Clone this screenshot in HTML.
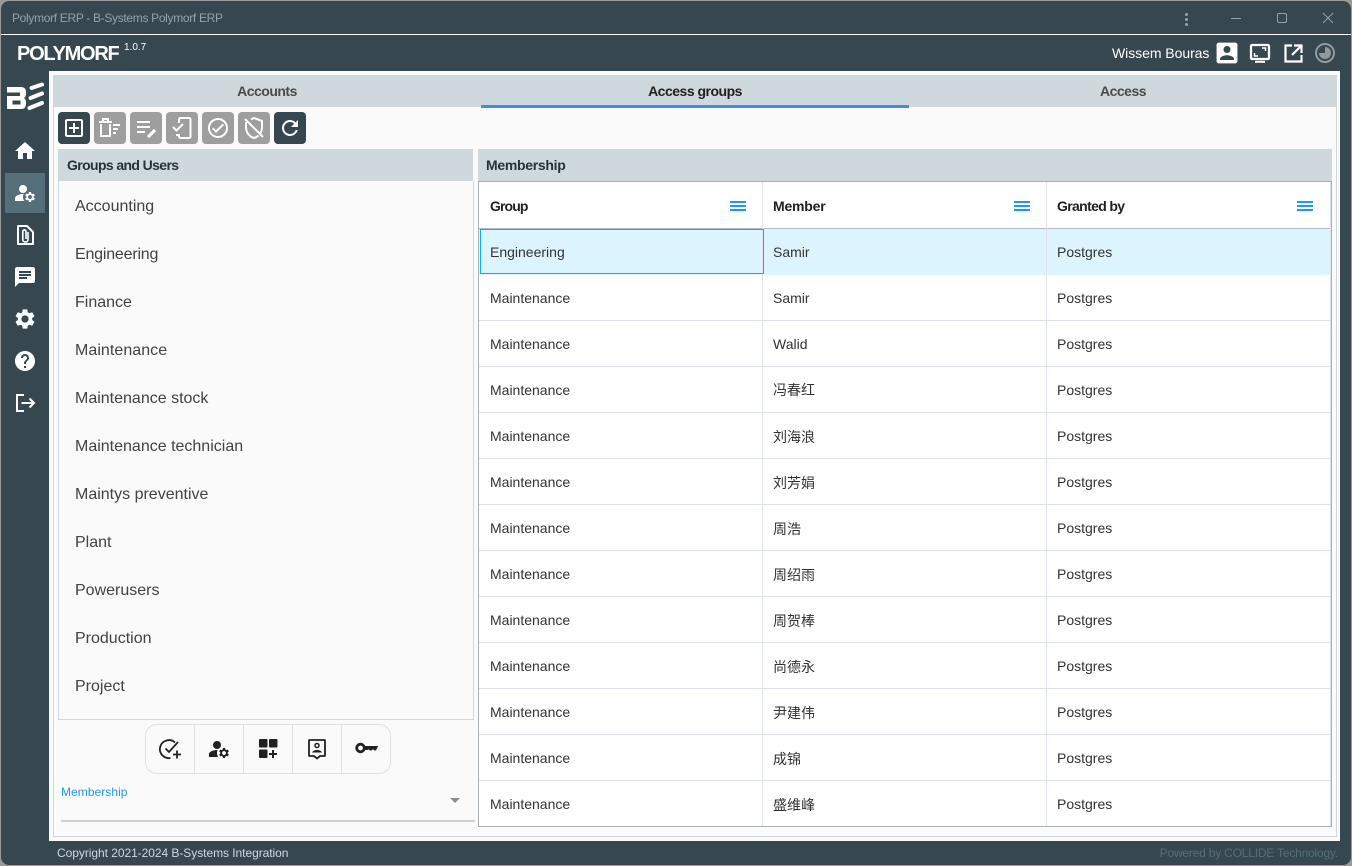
<!DOCTYPE html>
<html><head><meta charset="utf-8">
<style>
*{box-sizing:border-box}
html,body{margin:0;padding:0;width:1352px;height:866px;overflow:hidden;background:#9a9a9a;font-family:"Liberation Sans","Noto Sans CJK SC",sans-serif}
.a{position:absolute}
svg{display:block}
#win{position:absolute;left:1px;top:1px;width:1350px;height:864px;background:#37474f;border-radius:8px;overflow:hidden}
.page{position:absolute;left:0;top:0;width:1352px;height:866px}
.tab{position:absolute;top:75px;height:32px;width:428px;background:#cfd8dc;text-align:center;font-size:14px;line-height:32px;font-weight:bold;color:#4a4a4a;letter-spacing:-.5px}
.tb{position:absolute;top:112px;width:32px;height:32px;border-radius:4px;background:#9e9e9e}
.tb.d{background:#37474f}
.tb svg{position:absolute;left:4px;top:4px}
.h{position:absolute;background:#cfd8dc;font-size:14px;font-weight:bold;color:#263238;line-height:32px;height:32px;padding-left:9px;letter-spacing:-.55px}
.li{position:absolute;left:75px;font-size:16px;line-height:20px;color:#424242}
.nav{position:absolute;left:13px}
.grid{position:absolute;left:478px;top:181px;width:854px;height:646px;background:#fff;border:1px solid #a8b0b6;overflow:hidden}
.col{position:absolute;top:0;width:1px;height:644px;background:#dfe3ee}
.r{position:absolute;left:0;width:852px;height:46px;border-bottom:1px solid #dfe1ee;font-size:14px;color:#333}
.r span{position:absolute;top:14px;line-height:18px}
.r.c span:nth-child(2){top:15px}
.r span:nth-child(1){left:11px}
.r span:nth-child(2){left:294px}
.r span:nth-child(3){left:578px}
.th{position:absolute;top:15px;font-size:14px;font-weight:bold;color:#212121;line-height:18px}
.mn{position:absolute;top:19px;width:16px;height:10px;border-top:2px solid #2196f3;border-bottom:2px solid #2196f3}
.mn:after{content:"";position:absolute;left:0;right:0;top:2px;height:2px;background:#2196f3}
.bg{position:absolute;top:724px;width:50px;height:50px;border-top:1px solid #e0e0e0;border-bottom:1px solid #e0e0e0;border-left:1px solid #e0e0e0;background:#fafafa}
.bg svg{position:absolute;left:12px;top:12px}
</style></head><body>
<div id="win"></div>
<div class="page">
<div class="a" style="left:12px;top:10px;font-size:12px;line-height:16px;color:#90a4ae;letter-spacing:-.32px">Polymorf ERP - B-Systems Polymorf ERP</div>
<div class="a" style="left:1185px;top:13px;width:3px;height:3px;background:#90a4ae;border-radius:50%;box-shadow:0 5px 0 #90a4ae,0 10px 0 #90a4ae"></div>
<div class="a" style="left:1231px;top:18px;width:10px;height:1px;background:#90a4ae"></div>
<div class="a" style="left:1277px;top:13px;width:10px;height:10px;border:1px solid #90a4ae;border-radius:2px"></div>
<svg class="a" style="left:1322px;top:12px" width="12" height="12" viewBox="0 0 12 12"><path d="M1 1l10 10M11 1L1 11" stroke="#90a4ae" stroke-width="1"/></svg>
<div class="a" style="left:1px;top:34px;width:1350px;height:1px;background:#fff"></div>
<div class="a" style="left:17px;top:41px;font-size:20px;line-height:26px;font-weight:bold;color:#fff;letter-spacing:-1.25px">POLYMORF</div>
<div class="a" style="left:124px;top:41px;font-size:10px;line-height:14px;color:#fff">1.0.7</div>
<div class="a" style="left:1112px;top:44px;font-size:14px;line-height:18px;color:#fff;letter-spacing:-.05px">Wissem Bouras</div>
<svg class="a" style="left:1216px;top:42px" width="22" height="22" viewBox="2.500 2.500 19 19" fill="#fff"><path d="M3 5v14c0 1.100.89 2 2 2h14c1.100 0 2-.9 2-2V5c0-1.100-.9-2-2-2H5c-1.110 0-2 .9-2 2zm12 4c0 1.660-1.340 3-3 3s-3-1.340-3-3 1.340-3 3-3 3 1.340 3 3zm-9 8c0-2 4-3.100 6-3.100s6 1.100 6 3.100v1H6v-1z"/></svg>
<svg class="a" style="left:1249px;top:43px" width="22" height="20" viewBox="0 0 22 20" fill="none" stroke="#fff" stroke-width="2.300"><rect x="2" y="2" width="18" height="14" rx="1"/><path d="M5.500 10v3h3.500M16.500 8V5H13" stroke-width="1.500"/><path d="M6 18.800h10" stroke-width="2"/></svg>
<svg class="a" style="left:1284px;top:44px" width="19" height="19" viewBox="0 0 19 19" fill="none" stroke="#fff" stroke-width="2.200"><path d="M8 1.500H1.500v16h16V11M10 1.500h7.500V9M17 2L8 11"/></svg>
<svg class="a" style="left:1315px;top:43px" width="20" height="20" viewBox="0 0 20 20"><circle cx="10" cy="10" r="9" fill="none" stroke="#8f9a9f" stroke-width="2"/><path d="M10 4a6 6 0 1 1-6 6h6z" fill="#8f9a9f"/></svg>

<div class="a" style="left:49px;top:71px;width:1291px;height:770px;background:#fafafa"></div>
<div class="a" style="left:53px;top:75px;width:1284px;height:762px;border:1px solid #cfd8dc;border-top:0"></div>
<div class="tab" style="left:53px">Accounts</div>
<div class="tab" style="left:481px;color:#212121">Access groups</div>
<div class="tab" style="left:909px">Access</div>
<div class="a" style="left:481px;top:105px;width:428px;height:3px;background:#448aee"></div>

<svg class="a" style="left:7px;top:83px;overflow:visible" width="37" height="28" viewBox="0 0 37 28" fill="#fff"><path fill-rule="evenodd" d="M0 4H14Q19 4 19 9V11Q19 13.500 17 15Q19 16.500 19 19V21Q19 26 14 26H0V13H13V9.500H0ZM5.500 17.500V21.500H13.500V17.500Z"/><path d="M24.600 5L35 1.500M23.600 15L35 10.500M22.500 25L35 20" stroke="#fff" stroke-width="4" stroke-linecap="round" fill="none"/></svg>

<svg class="nav" style="top:139px" width="24" height="24" viewBox="0 0 24 24" fill="#fff"><path d="M10 20v-6h4v6h5v-8h3L12 3 2 12h3v8z"/></svg>
<div class="a" style="left:5px;top:173px;width:40px;height:40px;background:#546e7a"></div>
<svg class="nav" style="top:181px" width="24" height="24" viewBox="0 0 24 24" fill="#fff"><path d="M10.670 13.020C10.450 13.010 10.230 13 10 13c-2.420 0-4.680.67-6.610 1.820C2.510 15.340 2 16.320 2 17.350V20h9.260c-.79-1.130-1.260-2.510-1.260-4 0-1.070.25-2.070.67-2.980z"/><circle cx="10" cy="8" r="4"/><path d="M20.750 16c0-.22-.03-.42-.06-.63l1.140-1.010-1-1.730-1.450.49c-.32-.27-.68-.48-1.080-.63L18 11h-2l-.3 1.490c-.4.15-.76.36-1.080.63l-1.450-.49-1 1.730 1.140 1.010c-.03.21-.06.41-.06.63s.03.42.06.63l-1.140 1.010 1 1.730 1.450-.49c.32.27.68.48 1.080.63L16 21h2l.3-1.490c.4-.15.76-.36 1.080-.63l1.450.49 1-1.730-1.140-1.010c.03-.21.06-.41.06-.63zM17 18c-1.100 0-2-.9-2-2s.9-2 2-2 2 .9 2 2-.9 2-2 2z"/></svg>
<svg class="nav" style="top:223px" width="24" height="24" viewBox="0 0 24 24" fill="none" stroke="#fff" stroke-width="2"><path d="M5 3h9l6 6v12H5z" stroke-linejoin="round"/><path d="M15 9v7.500a2.600 2.600 0 0 1-5.200 0V8.500a1.600 1.600 0 0 1 3.200 0V16" stroke-width="1.600"/></svg>
<svg class="nav" style="top:265px" width="24" height="24" viewBox="0 0 24 24" fill="#fff"><path d="M20 2H4c-1.100 0-1.990.9-1.990 2L2 22l4-4h14c1.100 0 2-.9 2-2V4c0-1.100-.9-2-2-2zM6 9h12v2H6V9zm8 5H6v-2h8v2zm4-6H6V6h12v2z"/></svg>
<svg class="nav" style="top:307px" width="24" height="24" viewBox="0 0 24 24" fill="#fff"><path d="M19.140 12.940c.04-.3.06-.61.06-.94 0-.32-.02-.64-.07-.94l2.030-1.580c.18-.14.23-.41.12-.61l-1.920-3.320c-.12-.22-.37-.29-.59-.22l-2.390.96c-.5-.38-1.030-.7-1.620-.94l-.36-2.540c-.04-.24-.24-.41-.48-.41h-3.840c-.24 0-.43.17-.47.41l-.36 2.540c-.59.24-1.130.57-1.620.94l-2.390-.96c-.22-.08-.47 0-.59.22L2.740 8.870c-.12.21-.08.47.12.61l2.030 1.580c-.05.3-.09.63-.09.94s.02.64.07.94l-2.030 1.580c-.18.14-.23.41-.12.61l1.920 3.320c.12.22.37.29.59.22l2.390-.96c.5.38 1.030.7 1.620.94l.36 2.540c.05.24.24.41.48.41h3.840c.24 0 .44-.17.47-.41l.36-2.540c.59-.24 1.130-.56 1.620-.94l2.390.96c.22.08.47 0 .59-.22l1.920-3.320c.12-.22.07-.47-.12-.61l-2.010-1.580zM12 15.600c-1.980 0-3.600-1.620-3.600-3.600s1.620-3.600 3.600-3.600 3.600 1.620 3.600 3.600-1.620 3.600-3.600 3.600z"/></svg>
<svg class="nav" style="top:349px" width="24" height="24" viewBox="0 0 24 24" fill="#fff"><path d="M12 2C6.480 2 2 6.480 2 12s4.480 10 10 10 10-4.480 10-10S17.520 2 12 2zm1 17h-2v-2h2v2zm2.070-7.750l-.9.92C13.450 12.900 13 13.500 13 15h-2v-.5c0-1.100.45-2.100 1.170-2.830l1.240-1.260c.37-.36.59-.86.59-1.410 0-1.100-.9-2-2-2s-2 .9-2 2H8c0-2.210 1.790-4 4-4s4 1.790 4 4c0 .88-.36 1.680-.93 2.250z"/></svg>
<svg class="nav" style="top:391px" width="24" height="24" viewBox="0 0 24 24" fill="none" stroke="#fff" stroke-width="2"><path d="M11 4H4v16h7"/><path d="M8.500 12H21M16.500 7.500L21 12l-4.500 4.500"/></svg>

<div class="tb d" style="left:58px"><svg width="24" height="24" viewBox="0 0 24 24" fill="#fff"><path d="M19 3H5c-1.110 0-2 .9-2 2v14c0 1.100.89 2 2 2h14c1.100 0 2-.9 2-2V5c0-1.100-.9-2-2-2zm0 16H5V5h14v14zm-8-2h2v-4h4v-2h-4V7h-2v4H7v2h4z"/></svg></div>
<div class="tb" style="left:94px"><svg width="24" height="24" viewBox="0 0 24 24" fill="none" stroke="#fff" stroke-width="2"><path d="M1 6h13M5 5V3h5v2M3 8v12h9V8M15 9h7M15 13h5M15 17h3"/></svg></div>
<div class="tb" style="left:130px"><svg width="24" height="24" viewBox="0 0 24 24" fill="none" stroke="#fff" stroke-width="2"><path d="M3 6h13M3 11h13M3 16h8"/><path d="M14 21l7-7" stroke-width="3.200"/></svg></div>
<div class="tb" style="left:166px"><svg width="24" height="24" viewBox="0 0 24 24" fill="none" stroke="#fff" stroke-width="2"><path d="M9 7V3.500a1.500 1.500 0 0 1 1.500-1.500H19a1.500 1.500 0 0 1 1.500 1.500v17A1.500 1.500 0 0 1 19 22h-8.500A1.500 1.500 0 0 1 9 20.500V19H6"/><path d="M3 11l3.500 3.500L13 8"/></svg></div>
<div class="tb" style="left:202px"><svg width="24" height="24" viewBox="0 0 24 24" fill="#fff"><path d="M12 2C6.480 2 2 6.480 2 12s4.480 10 10 10 10-4.480 10-10S17.520 2 12 2zm0 18c-4.410 0-8-3.590-8-8s3.590-8 8-8 8 3.590 8 8-3.590 8-8 8zm4.590-12.420L10 14.170l-2.590-2.580L6 13l4 4 8-8z"/></svg></div>
<div class="tb" style="left:238px"><svg width="24" height="24" viewBox="0 0 24 24" fill="none" stroke="#fff" stroke-width="2"><path d="M9 3.500L12 2l8 3v6c0 2.500-.5 4.500-1.500 6M16.500 19.500c-1.300 1.200-2.800 2-4.500 2.500-4.500-1.200-8-5.500-8-11V6"/><path d="M3 3l18 18"/></svg></div>
<div class="tb d" style="left:274px"><svg width="24" height="24" viewBox="0 0 24 24" fill="#fff"><path d="M17.650 6.350C16.200 4.900 14.210 4 12 4c-4.420 0-7.990 3.580-7.990 8s3.570 8 7.990 8c3.730 0 6.840-2.550 7.730-6h-2.080c-.82 2.330-3.040 4-5.650 4-3.310 0-6-2.690-6-6s2.690-6 6-6c1.660 0 3.140.69 4.220 1.780L13 11h7V4l-2.350 2.350z"/></svg></div>

<div class="h" style="left:58px;top:149px;width:415px;letter-spacing:-.62px">Groups and Users</div>
<div class="a" style="left:58px;top:181px;width:416px;height:539px;border:1px solid #cfd8dc;border-top:0"></div>
<div class="li" style="top:197px">Accounting</div>
<div class="li" style="top:245px;letter-spacing:-.2px">Engineering</div>
<div class="li" style="top:293px">Finance</div>
<div class="li" style="top:341px;letter-spacing:.05px">Maintenance</div>
<div class="li" style="top:389px">Maintenance stock</div>
<div class="li" style="top:437px">Maintenance technician</div>
<div class="li" style="top:485px">Maintys preventive</div>
<div class="li" style="top:533px">Plant</div>
<div class="li" style="top:581px">Powerusers</div>
<div class="li" style="top:629px">Production</div>
<div class="li" style="top:677px">Project</div>

<div class="bg" style="left:145px;border-radius:12px 0 0 12px"><svg width="24" height="24" viewBox="0 0 24 24" fill="none" stroke="#212121" stroke-width="1.800"><path d="M17 5.500A9 9 0 1 0 12.500 21"/><path d="M7.500 11.500l3.500 3.500L20 5"/><path d="M19 13.500v8M15 17.500h8"/></svg></div>
<div class="bg" style="left:194px"><svg width="24" height="24" viewBox="0 0 24 24" fill="#212121"><path d="M10.670 13.020C10.450 13.010 10.230 13 10 13c-2.420 0-4.680.67-6.610 1.820C2.510 15.340 2 16.320 2 17.350V20h9.260c-.79-1.130-1.260-2.510-1.260-4 0-1.070.25-2.070.67-2.980z"/><circle cx="10" cy="8" r="4"/><path d="M20.750 16c0-.22-.03-.42-.06-.63l1.140-1.010-1-1.730-1.450.49c-.32-.27-.68-.48-1.080-.63L18 11h-2l-.3 1.490c-.4.15-.76.36-1.080.63l-1.450-.49-1 1.730 1.140 1.010c-.03.21-.06.41-.06.63s.03.42.06.63l-1.140 1.010 1 1.730 1.450-.49c.32.27.68.48 1.080.63L16 21h2l.3-1.490c.4-.15.76-.36 1.080-.63l1.450.49 1-1.730-1.140-1.010c.03-.21.06-.41.06-.63zM17 18c-1.100 0-2-.9-2-2s.9-2 2-2 2 .9 2 2-.9 2-2 2z"/></svg></div>
<div class="bg" style="left:243px"><svg width="24" height="24" viewBox="0 0 24 24" fill="#212121"><rect x="3" y="2" width="8.500" height="8.500" rx="1"/><rect x="13" y="2" width="8.500" height="8.500" rx="1"/><rect x="3" y="12.500" width="8.500" height="8.500" rx="1"/><path d="M16 13h2v3h3v2h-3v3h-2v-3h-3v-2h3z"/></svg></div>
<div class="bg" style="left:292px"><svg width="24" height="24" viewBox="0 0 24 24" fill="none" stroke="#212121" stroke-width="1.800"><path d="M4.500 3h15a.5.5 0 0 1 .5.500v15a.5.5 0 0 1-.5.500H15l-3 2.500L9 19H4.500a.5.5 0 0 1-.5-.5v-15a.5.5 0 0 1 .5-.5z"/><circle cx="12" cy="8.500" r="2" stroke-width="1.500"/><path d="M7 15.500c1-2 3-2.500 5-2.500s4 .5 5 2.500z" fill="#212121" stroke="none"/></svg></div>
<div class="bg" style="left:341px;width:50px;border-right:1px solid #e0e0e0;border-radius:0 12px 12px 0"><svg width="24" height="24" viewBox="0 0 24 24"><circle cx="6.500" cy="11" r="3.800" fill="none" stroke="#212121" stroke-width="2.800"/><path d="M10 9H24L22 13.500H20.500L19 12.200 17.500 13.500H16L14.500 12.200 13.500 13H10z" fill="#212121"/></svg></div>

<div class="a" style="left:61px;top:784px;font-size:12px;line-height:16px;color:#2196f3;letter-spacing:.05px">Membership</div>
<div class="a" style="left:450px;top:798px;width:0;height:0;border-left:5px solid transparent;border-right:5px solid transparent;border-top:5px solid #8e8e8e"></div>
<div class="a" style="left:61px;top:820px;width:414px;height:2px;background:#cfcfcf"></div>

<div class="h" style="left:478px;top:149px;width:854px;padding-left:8px;letter-spacing:-.3px">Membership</div>
<div class="grid">
<div class="th" style="left:11px;letter-spacing:-.9px">Group</div><div class="mn" style="left:251px"></div>
<div class="th" style="left:294px;letter-spacing:-.2px">Member</div><div class="mn" style="left:535px"></div>
<div class="th" style="left:578px;letter-spacing:-.65px">Granted by</div><div class="mn" style="left:818px"></div>
<div class="a" style="left:0;top:46px;width:852px;height:1px;background:#b4bbc0"></div>
<div class="r" style="top:47px;background:#dcf4fe;border-bottom:0"><span>Engineering</span><span>Samir</span><span>Postgres</span></div>
<div class="r" style="top:93px"><span>Maintenance</span><span>Samir</span><span>Postgres</span></div>
<div class="r" style="top:139px"><span>Maintenance</span><span>Walid</span><span>Postgres</span></div>
<div class="r" style="top:185px"><span>Maintenance</span><span>冯春红</span><span>Postgres</span></div>
<div class="r c" style="top:231px"><span>Maintenance</span><span>刘海浪</span><span>Postgres</span></div>
<div class="r c" style="top:277px"><span>Maintenance</span><span>刘芳娟</span><span>Postgres</span></div>
<div class="r c" style="top:323px"><span>Maintenance</span><span>周浩</span><span>Postgres</span></div>
<div class="r c" style="top:369px"><span>Maintenance</span><span>周绍雨</span><span>Postgres</span></div>
<div class="r c" style="top:415px"><span>Maintenance</span><span>周贺棒</span><span>Postgres</span></div>
<div class="r c" style="top:461px"><span>Maintenance</span><span>尚德永</span><span>Postgres</span></div>
<div class="r c" style="top:507px"><span>Maintenance</span><span>尹建伟</span><span>Postgres</span></div>
<div class="r c" style="top:553px"><span>Maintenance</span><span>成锦</span><span>Postgres</span></div>
<div class="r c" style="top:599px;border-bottom:0"><span>Maintenance</span><span>盛维峰</span><span>Postgres</span></div>
<div class="col" style="left:283px"></div>
<div class="col" style="left:567px"></div>
<div class="col" style="left:851px"></div>
<div class="a" style="left:1px;top:47px;width:284px;height:45px;border:1px solid #03b0ff"></div>
</div>

<div class="a" style="left:57px;top:845px;font-size:12px;line-height:16px;color:#cfd8dc;letter-spacing:-.05px">Copyright 2021-2024 B-Systems Integration</div>
<div class="a" style="right:14px;top:845px;font-size:12px;line-height:16px;color:#546e7a;letter-spacing:-.2px">Powered by COLLIDE Technology.</div>
</div>
</body></html>
